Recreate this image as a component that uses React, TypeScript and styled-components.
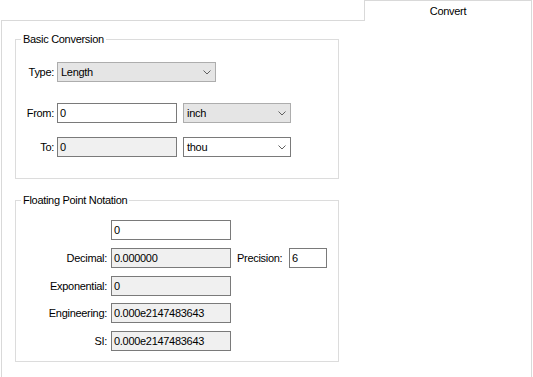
import React from "react";
import styled, { createGlobalStyle } from "styled-components";

const Global = createGlobalStyle`
  html, body { margin: 0; padding: 0; background: #fff; }
  body {
    font-family: "Liberation Sans", Arial, sans-serif;
    font-size: 11px;
    letter-spacing: -0.3px;
    color: #000;
  }
  * { box-sizing: border-box; }
`;

const Window = styled.div`
  width: 533px;
  height: 377px;
  padding-left: 1px;
  overflow: hidden;
  background: #fff;
  display: flex;
  flex-direction: column;
`;

const TabStrip = styled.div`
  display: flex;
  width: 531px;
  height: 21px;
  flex: none;
`;

const TabFiller = styled.div`
  flex: 1;
  border-bottom: 1px solid #d9d9d9;
`;

const Tab = styled.div`
  width: 168px;
  border: 1px solid #d9d9d9;
  border-bottom: none;
  display: flex;
  justify-content: center;
  padding-top: 4px;
  line-height: 13px;
`;

const Panel = styled.div`
  width: 531px;
  flex: 1;
  border-left: 1px solid #d9d9d9;
  border-right: 1px solid #d9d9d9;
  padding: 18px 0 0 13px;
  display: flex;
  flex-direction: column;
`;

const Group = styled.div<{ $mt?: number; $pt: number; $pb: number }>`
  position: relative;
  width: 324px;
  margin-top: ${(p) => p.$mt ?? 0}px;
  border: 1px solid #dcdcdc;
  padding: ${(p) => p.$pt}px 0 ${(p) => p.$pb}px 0;
  display: flex;
  flex-direction: column;
`;

const GroupTitle = styled.span`
  position: absolute;
  top: -7px;
  left: 5px;
  padding: 0 2px;
  background: #fff;
  line-height: 13px;
  white-space: nowrap;
`;

const Row = styled.div<{ $mt?: number }>`
  display: flex;
  align-items: center;
  height: 20px;
  margin-top: ${(p) => p.$mt ?? 0}px;
`;

const Label = styled.span<{ $w: number; $gap: number }>`
  width: ${(p) => p.$w}px;
  margin-right: ${(p) => p.$gap}px;
  text-align: right;
  white-space: nowrap;
  flex: none;
`;

const SideLabel = styled.span`
  width: 52px;
  margin-left: 6px;
  white-space: nowrap;
  flex: none;
`;

const TextBox = styled.div<{ $w: number; $ro?: boolean }>`
  width: ${(p) => p.$w}px;
  height: 20px;
  flex: none;
  border: 1px solid #7a7a7a;
  background: ${(p) => (p.$ro ? "#f0f0f0" : "#fff")};
  padding: 0 2px;
  display: flex;
  align-items: center;
  white-space: nowrap;
  overflow: hidden;
`;

const Combo = styled.div<{ $w: number; $flat?: boolean; $ml?: number }>`
  width: ${(p) => p.$w}px;
  height: 20px;
  flex: none;
  margin-left: ${(p) => p.$ml ?? 0}px;
  border: 1px solid ${(p) => (p.$flat ? "#adadad" : "#7a7a7a")};
  background: ${(p) => (p.$flat ? "#e5e5e5" : "#fff")};
  padding: 0 4px 0 3px;
  display: flex;
  align-items: center;
  justify-content: space-between;
`;

const Chevron = () => (
  <svg width="8" height="5" viewBox="0 0 8 5">
    <polyline points="0.5,0.5 4,4 7.5,0.5" fill="none" stroke="#606060" strokeWidth="1" />
  </svg>
);

export default function App() {
  return (
    <>
      <Global />
      <Window>
        <TabStrip>
          <TabFiller />
          <Tab>Convert</Tab>
        </TabStrip>
        <Panel>
          <Group $pt={22} $pb={21}>
            <GroupTitle>Basic Conversion</GroupTitle>
            <Row>
              <Label $w={38} $gap={3}>Type:</Label>
              <Combo $w={159} $flat>
                <span>Length</span>
                <Chevron />
              </Combo>
            </Row>
            <Row $mt={21}>
              <Label $w={38} $gap={3}>From:</Label>
              <TextBox $w={120}>0</TextBox>
              <Combo $w={108} $flat $ml={6}>
                <span>inch</span>
                <Chevron />
              </Combo>
            </Row>
            <Row $mt={14}>
              <Label $w={38} $gap={3}>To:</Label>
              <TextBox $w={120} $ro>0</TextBox>
              <Combo $w={108} $ml={6}>
                <span>thou</span>
                <Chevron />
              </Combo>
            </Row>
          </Group>
          <Group $mt={21} $pt={19} $pb={10}>
            <GroupTitle>Floating Point Notation</GroupTitle>
            <Row>
              <Label $w={91} $gap={4} />
              <TextBox $w={120}>0</TextBox>
            </Row>
            <Row $mt={8}>
              <Label $w={91} $gap={4}>Decimal:</Label>
              <TextBox $w={120} $ro>0.000000</TextBox>
              <SideLabel>Precision:</SideLabel>
              <TextBox $w={38}>6</TextBox>
            </Row>
            <Row $mt={8}>
              <Label $w={91} $gap={4}>Exponential:</Label>
              <TextBox $w={120} $ro>0</TextBox>
            </Row>
            <Row $mt={7}>
              <Label $w={91} $gap={4}>Engineering:</Label>
              <TextBox $w={120} $ro>0.000e2147483643</TextBox>
            </Row>
            <Row $mt={8}>
              <Label $w={91} $gap={4}>SI:</Label>
              <TextBox $w={120} $ro>0.000e2147483643</TextBox>
            </Row>
          </Group>
        </Panel>
      </Window>
    </>
  );
}
